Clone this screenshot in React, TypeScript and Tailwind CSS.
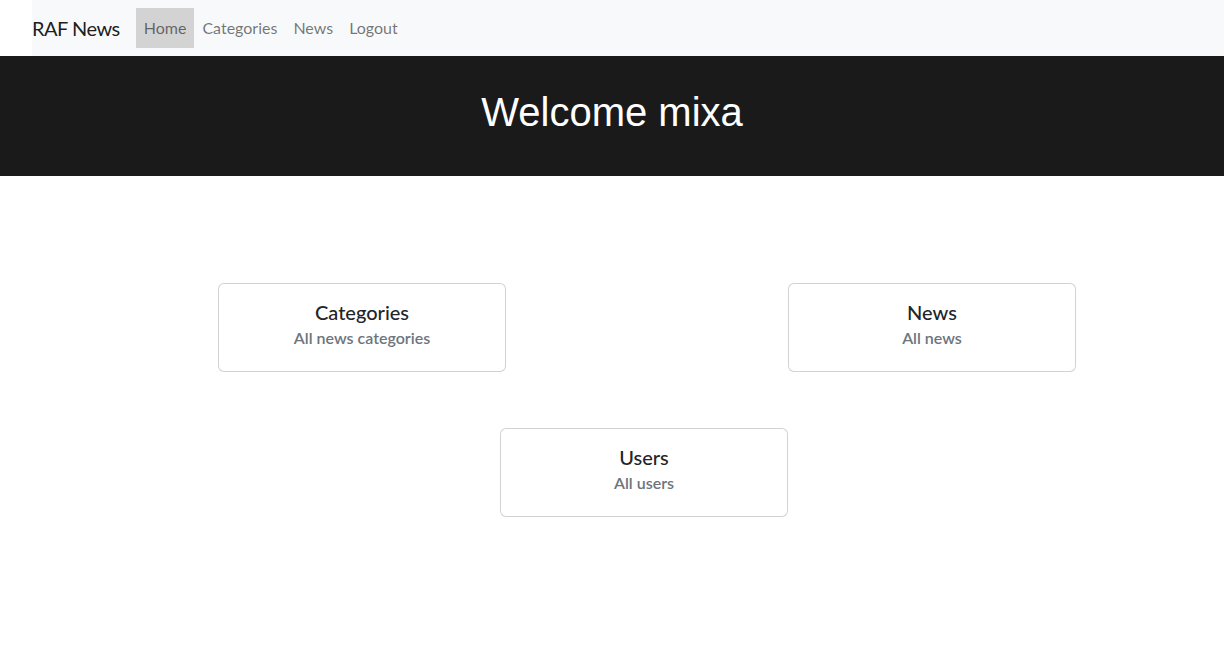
const sans = "font-['Segoe_UI',Lato,'Noto_Sans',sans-serif]";

function Card({ title, subtitle }: { title: string; subtitle: string }) {
  return (
    <div className="w-[288px] rounded-[6px] border border-black/[0.175] bg-white p-4 text-center">
      <h5 className="mb-2 text-[20px] font-medium leading-[24px] text-[#212529]">{title}</h5>
      <h6 className="-mt-1 mb-2 text-[16px] font-semibold leading-[19.2px] text-[#6c757d]">{subtitle}</h6>
    </div>
  );
}

export default function App() {
  return (
    <div className={`min-h-[657px] bg-white ${sans}`}>
      {/* Navbar */}
      <nav className="ml-8 flex h-14 items-center bg-[#f8f9fa]">
        <span className="mr-4 text-[20px] leading-[30px] tracking-[-0.5px] text-black/90">RAF News</span>
        <a className="bg-[#d3d3d3] px-2 py-2 text-[16px] leading-6 text-black/55">Home</a>
        <a className="px-2 py-2 text-[16px] leading-6 text-black/55">Categories</a>
        <a className="px-2 py-2 text-[16px] leading-6 text-black/55">News</a>
        <a className="px-2 py-2 text-[16px] leading-6 text-black/55">Logout</a>
      </nav>

      {/* Banner */}
      <div className="h-[120px] bg-[#1a1a1a] pt-[33px] text-center">
        <h1 className="font-['Liberation_Sans',Arial,sans-serif] text-[40px] leading-[46px] text-white">Welcome mixa</h1>
      </div>

      {/* Cards */}
      <div className="pt-[107px]">
        <div className="ml-[218px] flex w-[858px] justify-between">
          <Card title="Categories" subtitle="All news categories" />
          <Card title="News" subtitle="All news" />
        </div>
        <div className="ml-[500px] mt-[56px]">
          <Card title="Users" subtitle="All users" />
        </div>
      </div>
    </div>
  );
}
